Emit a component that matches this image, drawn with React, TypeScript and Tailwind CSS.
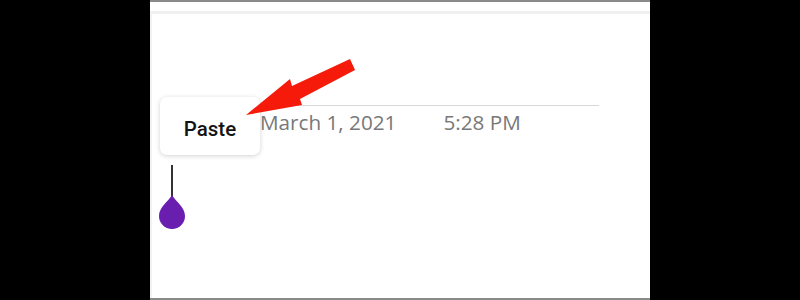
import React from 'react';

const Arrow: React.FC = () => (
  <svg
    className="absolute left-0 top-0 pointer-events-none"
    width="500"
    height="300"
    viewBox="150 0 500 300"
  >
    <polygon
      points="246,113 290,77 292,84 350,57 355,68 300,97 302,103"
      fill="#f51a0a"
    />
  </svg>
);

const Handle: React.FC = () => (
  <div className="absolute left-[8px] top-[163px] flex flex-col items-center">
    <div className="w-[2px] h-[32px] bg-[#333333]" />
    <svg width="28" height="36" viewBox="0 0 28 36" className="-mt-[3px]">
      <path d="M14 1 C18 8 27 13 27 22 A13 13 0 0 1 1 22 C1 13 10 8 14 1 Z" fill="#6a1eb0" />
    </svg>
  </div>
);

export default function App() {
  return (
    <div className="w-[800px] h-[300px] bg-black flex">
      <div className="relative ml-[150px] w-[500px] h-full bg-white border-t-2 border-b-2 border-[#8a8a8a]">
        {/* faint header edge */}
        <div className="h-[9px]" />
        <div className="h-[3px] bg-[#f0f0f0]" />
        <div className="absolute left-0 top-[11px] bottom-0 w-[2px] bg-[#f2f2f2]" />

        {/* entry row */}
        <div className="ml-[110px] mt-[91px] mr-[51px] border-t border-[#d8d8d8]">
          <div
            className="flex items-baseline pt-[2px] text-[20.7px] leading-[28px] text-[#787878]"
            style={{ fontFamily: '"Open Sans", "Noto Sans", sans-serif' }}
          >
            <span>March 1, 2021</span>
            <span className="ml-[47px]">5:28 PM</span>
          </div>
        </div>

        {/* paste popup */}
        <div
          className="absolute left-[10px] top-[95px] w-[100px] h-[58px] rounded-[7px] bg-white shadow-[0_1px_5px_rgba(0,0,0,0.18)] flex items-center justify-center pt-[6px] text-[20.5px] font-medium text-[#141414]"
          style={{ fontFamily: 'Roboto, "Liberation Sans", sans-serif' }}
        >
          Paste
        </div>

        <Handle />
        <Arrow />
      </div>
    </div>
  );
}
